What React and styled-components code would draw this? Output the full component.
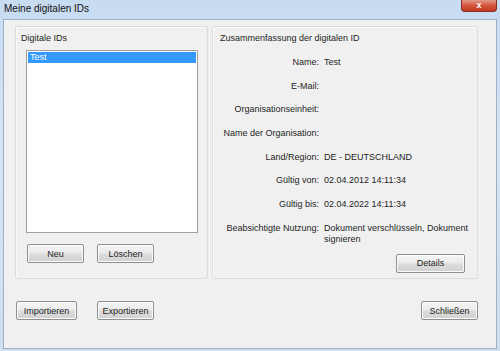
import React from 'react';
import styled, {createGlobalStyle} from 'styled-components';

const GlobalStyle = createGlobalStyle`
    html, body {
        margin: 0;
        padding: 0;
        background: #d3e2f2;
    }
    body {
        font-family: "Liberation Sans", Arial, sans-serif;
        font-size: 9px;
        color: #1e1e1e;
    }
`;

const Window = styled.div`
    width: 500px;
    height: 351px;
    box-sizing: border-box;
    display: flex;
    flex-direction: column;
    background: linear-gradient(180deg, #c7dbf1 0%, #d6e4f4 40%, #cfdff0 100%);
    padding: 0 3px 2px 3px;
`;

const TitleBar = styled.div`
    height: 19px;
    display: flex;
    align-items: flex-start;
    justify-content: space-between;
`;

const Title = styled.div`
    font-size: 10px;
    color: #101010;
    padding-top: 3px;
    padding-left: 1px;
`;

const CloseButton = styled.div`
    width: 34px;
    height: 11px;
    border: 1px solid #8a2d22;
    border-top: none;
    border-radius: 0 0 4px 4px;
    background: linear-gradient(180deg, #e59a8a 0%, #d4553f 50%, #c23a22 100%);
    display: flex;
    align-items: center;
    justify-content: center;
    color: #fff;
    font-size: 9px;
    font-weight: bold;
    line-height: 1;
`;

const Body = styled.div`
    flex: 1;
    background: #f0f0f0;
    border: 1px solid #9cb1c9;
    display: flex;
    flex-direction: column;
    padding: 6px 18px 0 11px;
`;

const Groups = styled.div`
    display: flex;
    gap: 4px;
    height: 253px;
`;

const GroupBox = styled.div`
    width: ${p => p.$w}px;
    box-sizing: border-box;
    border: 1px solid #dcdcdc;
    box-shadow: inset 1px 1px 0 #fbfbfb;
    border-radius: 2px;
    display: flex;
    flex-direction: column;
    padding: 6px 0 0 0;
`;

const GroupTitle = styled.div`
    padding-left: ${p => p.$pl || 5}px;
    height: 12px;
`;

const ListBox = styled.div`
    margin: 5px 0 0 10px;
    width: 172px;
    height: 183px;
    box-sizing: border-box;
    background: #fff;
    border: 1px solid #a0a0a0;
    padding: 1px;
`;

const ListItem = styled.div`
    height: 11px;
    line-height: 11px;
    padding-left: 2px;
    background: ${p => p.$selected ? '#3399ff' : 'transparent'};
    color: ${p => p.$selected ? '#fff' : '#1e1e1e'};
`;

const ButtonRow = styled.div`
    display: flex;
    gap: ${p => p.$gap}px;
    margin: ${p => p.$m};
`;

const Button = styled.button`
    width: ${p => p.$w}px;
    height: 19px;
    box-sizing: border-box;
    border: 1px solid #8f8f8f;
    border-radius: 2px;
    background: linear-gradient(180deg, #f6f6f6 0%, #eaeaea 48%, #dcdcdc 52%, #d2d2d2 100%);
    box-shadow: inset 0 0 0 1px #fbfbfb;
    font-family: "Liberation Sans", Arial, sans-serif;
    font-size: 9px;
    color: #1e1e1e;
    padding: 0;
`;

const InfoGrid = styled.div`
    display: grid;
    grid-template-columns: 106px 1fr;
    column-gap: 5px;
    row-gap: 12.7px;
    margin-top: 12px;
`;

const Label = styled.div`
    text-align: right;
    line-height: 11px;
`;

const Value = styled.div`
    line-height: 11px;
`;

const DetailsRow = styled.div`
    display: flex;
    justify-content: flex-end;
    margin: 9px 12px 0 0;
`;

const Footer = styled.div`
    display: flex;
    justify-content: space-between;
    margin-top: 22px;
    padding-left: 1px;
`;

const rows = [
    ['Name:', 'Test'],
    ['E-Mail:', ''],
    ['Organisationseinheit:', ''],
    ['Name der Organisation:', ''],
    ['Land/Region:', 'DE - DEUTSCHLAND'],
    ['Gültig von:', '02.04.2012 14:11:34'],
    ['Gültig bis:', '02.04.2022 14:11:34'],
    ['Beabsichtigte Nutzung:', 'Dokument verschlüsseln, Dokument signieren'],
];

const App = () => {
    return (
        <>
            <GlobalStyle/>
            <Window>
                <TitleBar>
                    <Title>Meine digitalen IDs</Title>
                    <CloseButton>x</CloseButton>
                </TitleBar>
                <Body>
                    <Groups>
                        <GroupBox $w={193}>
                            <GroupTitle>Digitale IDs</GroupTitle>
                            <ListBox>
                                <ListItem $selected>Test</ListItem>
                            </ListBox>
                            <ButtonRow $gap={13} $m={"11px 0 0 11px"}>
                                <Button $w={57}>Neu</Button>
                                <Button $w={57}>Löschen</Button>
                            </ButtonRow>
                        </GroupBox>
                        <GroupBox $w={266}>
                            <GroupTitle $pl={7}>Zusammenfassung der digitalen ID</GroupTitle>
                            <InfoGrid>
                                {rows.map(([l, v]) => (
                                    <React.Fragment key={l}>
                                        <Label>{l}</Label>
                                        <Value>{v}</Value>
                                    </React.Fragment>
                                ))}
                            </InfoGrid>
                            <DetailsRow>
                                <Button $w={69}>Details</Button>
                            </DetailsRow>
                        </GroupBox>
                    </Groups>
                    <Footer>
                        <ButtonRow $gap={20} $m={"0"}>
                            <Button $w={61}>Importieren</Button>
                            <Button $w={57}>Exportieren</Button>
                        </ButtonRow>
                        <Button $w={57}>Schließen</Button>
                    </Footer>
                </Body>
            </Window>
        </>
    );
};

export default App;
